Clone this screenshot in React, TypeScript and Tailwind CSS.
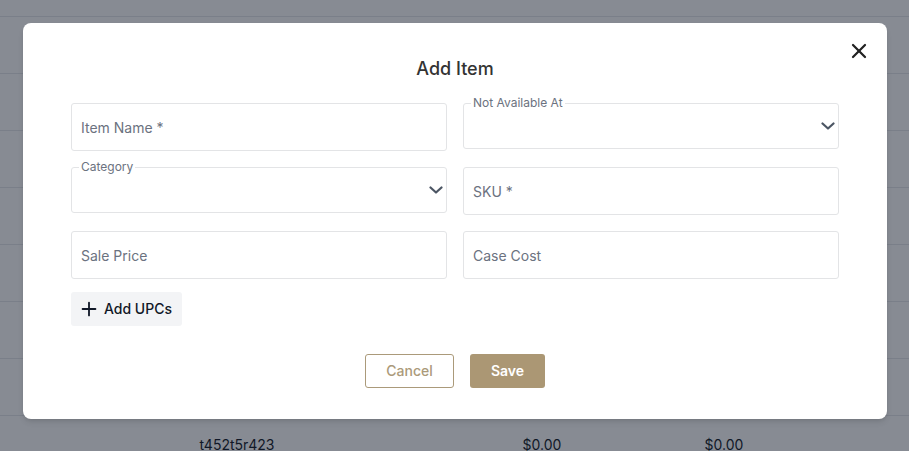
import { X, Plus } from "lucide-react";

const rows = [0, 1, 2, 3, 4, 5, 6];

const TextField = ({ placeholder }: { placeholder: string }) => (
  <input
    placeholder={placeholder}
    className="h-12 w-full rounded-[3px] border border-[#e3e4e6] bg-white px-[9px] text-sm text-[#111827] outline-none placeholder:text-[#6b7280]"
  />
);

const SelectField = ({ label }: { label: string }) => (
  <div className="relative h-[46px] w-full rounded-[3px] border border-[#e3e4e6] bg-white">
    {/* floating label on the border */}
    <span className="absolute -top-[8px] left-[7px] bg-white px-[2px] text-xs leading-[14px] text-[#6b7280]">
      {label}
    </span>
    <svg
      width="14"
      height="8"
      viewBox="0 0 14 8"
      fill="none"
      className="absolute right-[3px] top-[18px]"
    >
      <path d="M1.5 1.5 7 6.5l5.5-5" stroke="#4b5563" strokeWidth="2.2" strokeLinecap="round" strokeLinejoin="round" />
    </svg>
  </div>
);

export default function App() {
  return (
    <div className="relative h-[451px] w-[909px] overflow-hidden bg-white font-['Inter',sans-serif]">
      {/* Table behind the modal */}
      <div className="h-[17px] border-b border-gray-200" />
      {rows.map((r) => (
        <div key={r} className="h-[57px] border-b border-gray-200" />
      ))}
      <div className="grid h-[57px] grid-cols-[474px_136px_228px_1fr] items-center text-center text-sm text-[#111827]">
        <span>t452t5r423</span>
        <span>$0.00</span>
        <span>$0.00</span>
        <span />
      </div>

      {/* Overlay */}
      <div className="absolute inset-0 bg-gray-900/50 pb-[23px] pl-[23px] pr-[22px] pt-[23px]">
        <div className="relative h-[396px] w-full rounded-lg bg-white px-12 pt-[32px] shadow-md">
          <button className="absolute right-[16px] top-[16px] text-[#222]">
            <X size={24} strokeWidth={2.25} />
          </button>

          <h2 className="text-center text-lg leading-7 font-medium text-[#333]">Add Item</h2>

          <div className="mt-[20px] grid grid-cols-2 gap-x-4 gap-y-4">
            <TextField placeholder="Item Name *" />
            <SelectField label="Not Available At" />
            <SelectField label="Category" />
            <TextField placeholder="SKU *" />
            <TextField placeholder="Sale Price" />
            <TextField placeholder="Case Cost" />
          </div>

          <button className="mt-[13px] flex h-[34px] items-center gap-1 rounded-[3px] bg-[#f3f4f6] pl-[7px] pr-[10px] text-sm font-medium text-[#111827]">
            <Plus size={22} strokeWidth={2} />
            Add UPCs
          </button>

          <div className="mt-[28px] flex justify-center gap-4">
            <button className="h-[34px] w-[89px] rounded-[3px] border border-[#ab9a7a] text-sm font-medium text-[#ab9a7a]">
              Cancel
            </button>
            <button className="h-[34px] w-[75px] rounded-[3px] bg-[#ab9774] text-sm font-semibold text-white">
              Save
            </button>
          </div>
        </div>
      </div>
    </div>
  );
}
